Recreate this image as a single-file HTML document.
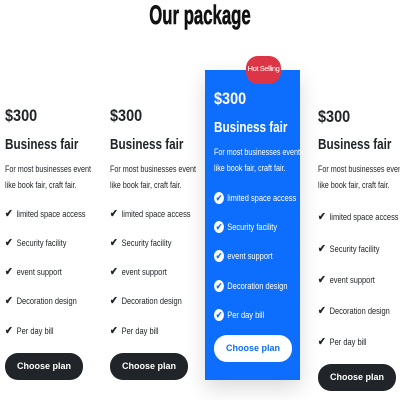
<!DOCTYPE html>
<html><head><style>
*{margin:0;padding:0;box-sizing:border-box}
body{width:400px;height:400px;background:#fff;font-family:"Liberation Sans",sans-serif;position:relative;overflow:hidden;color:#212529}
h1{position:absolute;top:0;left:0;width:400px;text-align:center;font-size:27px;font-weight:bold;line-height:30px;transform:scaleX(0.62);color:#111;-webkit-text-stroke:0.6px #111}
.col{position:absolute;width:100px}
.price,.name,.desc,.f{transform-origin:0 0;white-space:nowrap}
.price{position:absolute;font-size:17px;font-weight:bold;line-height:20px;transform:scaleX(0.85)}
.name{position:absolute;font-size:15px;font-weight:bold;line-height:18px;transform:scaleX(0.78)}
.desc{position:absolute;font-size:9px;line-height:16px;transform:scaleX(0.8)}
.f{position:absolute;font-size:9px;line-height:12px;transform:scaleX(0.83)}
.f b{display:inline-block;width:10px;font-size:11px;margin-right:4px}
.btn{position:absolute;width:78px;height:27px;border-radius:13px;background:#212529;color:#fff;font-size:9px;font-weight:bold;text-align:center;line-height:27px}
.blue{position:absolute;left:205px;top:70px;width:95px;height:310px;background:#0d6efd;box-shadow:0 8px 20px rgba(0,0,0,.15);color:#fff}
.blue .f b{background:#fff;color:#0d6efd;border-radius:50%;width:12px;height:12px;font-size:9px;text-align:center;line-height:12px}
.badge{position:absolute;left:246px;top:56px;width:35px;height:28px;border-radius:12px;background:#dc3545;color:#fff;font-size:7.5px;text-align:center;line-height:26px;white-space:nowrap;letter-spacing:-0.4px}
</style></head><body>
<h1>Our package</h1>

<div class="col" style="left:5px;top:0">
<div class="price" style="top:106px">$300</div>
<div class="name" style="top:136px">Business fair</div>
<div class="desc" style="top:161px">For most businesses event<br>like book fair, craft fair.</div>
<div class="f" style="top:208px"><b>✔</b>limited space access</div>
<div class="f" style="top:237px"><b>✔</b>Security facility</div>
<div class="f" style="top:266px"><b>✔</b>event support</div>
<div class="f" style="top:295px"><b>✔</b>Decoration design</div>
<div class="f" style="top:325px"><b>✔</b>Per day bill</div>
<div class="btn" style="top:353px">Choose plan</div>
</div>

<div class="col" style="left:110px;top:0">
<div class="price" style="top:106px">$300</div>
<div class="name" style="top:136px">Business fair</div>
<div class="desc" style="top:161px">For most businesses event<br>like book fair, craft fair.</div>
<div class="f" style="top:208px"><b>✔</b>limited space access</div>
<div class="f" style="top:237px"><b>✔</b>Security facility</div>
<div class="f" style="top:266px"><b>✔</b>event support</div>
<div class="f" style="top:295px"><b>✔</b>Decoration design</div>
<div class="f" style="top:325px"><b>✔</b>Per day bill</div>
<div class="btn" style="top:353px">Choose plan</div>
</div>

<div class="blue">
<div class="price" style="left:9px;top:19px">$300</div>
<div class="name" style="left:9px;top:49px">Business fair</div>
<div class="desc" style="left:9px;top:74px">For most businesses event<br>like book fair, craft fair.</div>
<div class="f" style="left:9px;top:122px"><b>✔</b>limited space access</div>
<div class="f" style="left:9px;top:151px"><b>✔</b>Security facility</div>
<div class="f" style="left:9px;top:180px"><b>✔</b>event support</div>
<div class="f" style="left:9px;top:210px"><b>✔</b>Decoration design</div>
<div class="f" style="left:9px;top:239px"><b>✔</b>Per day bill</div>
<div class="btn" style="left:9px;top:265px;background:#fff;color:#0d6efd">Choose plan</div>
</div>
<div class="badge">Hot Selling</div>

<div class="col" style="left:318px;top:0">
<div class="price" style="top:107px">$300</div>
<div class="name" style="top:136px">Business fair</div>
<div class="desc" style="top:161px">For most businesses event<br>like book fair, craft fair.</div>
<div class="f" style="top:211px"><b>✔</b>limited space access</div>
<div class="f" style="top:243px"><b>✔</b>Security facility</div>
<div class="f" style="top:274px"><b>✔</b>event support</div>
<div class="f" style="top:305px"><b>✔</b>Decoration design</div>
<div class="f" style="top:336px"><b>✔</b>Per day bill</div>
<div class="btn" style="top:364px">Choose plan</div>
</div>
</body></html>
